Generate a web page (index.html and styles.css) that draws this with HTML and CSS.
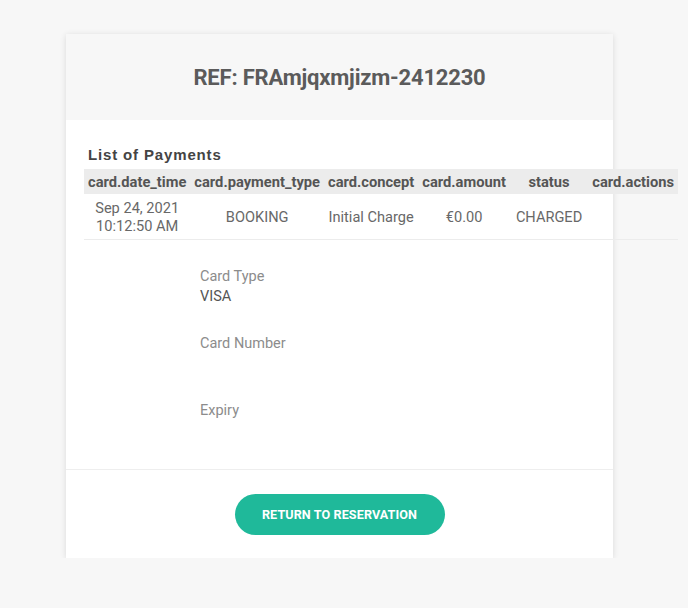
FILE: index.html
```html
<!DOCTYPE html>
<html>
<head>
<meta charset="utf-8">
<link rel="stylesheet" href="styles.css">
</head>
<body>
<div class="card">
  <div class="card-header">
    <h1 class="ref-title">REF: FRAmjqxmjizm-2412230</h1>
  </div>
  <div class="card-body">
    <h2 class="list-title">List of Payments</h2>
    <table class="payments">
      <thead>
        <tr>
          <th>card.date_time</th>
          <th>card.payment_type</th>
          <th>card.concept</th>
          <th>card.amount</th>
          <th class="col-status">status</th>
          <th>card.actions</th>
        </tr>
      </thead>
      <tbody>
        <tr>
          <td>Sep 24, 2021<br>10:12:50 AM</td>
          <td>BOOKING</td>
          <td>Initial Charge</td>
          <td>€0.00</td>
          <td class="col-status">CHARGED</td>
          <td></td>
        </tr>
      </tbody>
    </table>
    <div class="details">
      <div class="detail">
        <div class="detail-label">Card Type</div>
        <div class="detail-value">VISA</div>
      </div>
      <div class="detail">
        <div class="detail-label">Card Number</div>
        <div class="detail-value"></div>
      </div>
      <div class="detail">
        <div class="detail-label">Expiry</div>
        <div class="detail-value"></div>
      </div>
    </div>
  </div>
  <div class="card-footer">
    <button class="btn-return">RETURN TO RESERVATION</button>
  </div>
</div>
</body>
</html>
```

FILE: styles.css
```css
html, body {
  margin: 0;
  padding: 0;
  background: #f7f7f7;
  font-family: Roboto, "Liberation Sans", sans-serif;
}

.card {
  width: 547px;
  margin: 34px 0 0 66px;
  background: #ffffff;
  box-shadow: 0 1px 6px rgba(0, 0, 0, 0.12);
}

.card-header {
  height: 86px;
  background: #f7f7f7;
  display: flex;
  align-items: center;
  justify-content: center;
}

.ref-title {
  margin: 0;
  font-size: 22px;
  font-weight: 700;
  color: #5b5b5b;
  letter-spacing: -0.2px;
}

.card-body {
  padding: 26px 0 0 18px;
}

.list-title {
  margin: 0 0 5px 4px;
  font-family: "Liberation Sans", Arial, sans-serif;
  font-size: 15px;
  font-weight: 700;
  letter-spacing: 0.85px;
  color: #444444;
  line-height: 18px;
}

.payments {
  border-collapse: collapse;
}

.payments th {
  background: #ececec;
  color: #555555;
  font-size: 14.7px;
  font-weight: 700;
  height: 25px;
  padding: 0 4px;
  text-align: center;
  white-space: nowrap;
}

.payments td {
  color: #686868;
  font-size: 14.6px;
  text-align: center;
  padding: 5px 4px 4px;
  line-height: 18px;
  height: 36px;
  border-bottom: 1px solid #ececec;
  white-space: nowrap;
}

.payments .col-status {
  padding-left: 6px;
  padding-right: 6px;
}

.details {
  padding: 27px 0 28px 116px;
}

.detail {
  margin-bottom: 27px;
}

.detail:last-child {
  margin-bottom: 0;
}

.detail-label {
  font-size: 14.5px;
  line-height: 20px;
  height: 20px;
  color: #8c8c8c;
}

.detail-value {
  font-size: 14.5px;
  line-height: 20px;
  height: 20px;
  color: #555555;
}

.card-footer {
  border-top: 1px solid #eeeeee;
  display: flex;
  justify-content: center;
  padding: 24px 0 23px;
}

.btn-return {
  width: 210px;
  height: 41px;
  border: none;
  border-radius: 21px;
  background: #1fb99a;
  color: #ffffff;
  font-family: Roboto, "Liberation Sans", sans-serif;
  font-size: 12.6px;
  font-weight: 700;
  letter-spacing: 0.1px;
  cursor: pointer;
}
```
